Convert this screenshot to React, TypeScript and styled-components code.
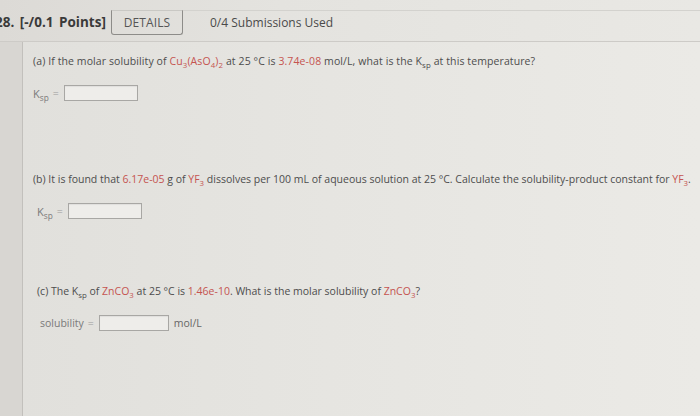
import React from "react";
import styled, { createGlobalStyle } from "styled-components";

const GlobalStyle = createGlobalStyle`
  html, body {
    margin: 0;
    padding: 0;
    background: #dedcd8;
    font-family: "Open Sans", "Liberation Sans", sans-serif;
  }
`;

const Page = styled.div`
  width: 700px;
  height: 416px;
  overflow: hidden;
  display: flex;
  flex-direction: column;
  background: #dedcd8;
`;

const Header = styled.header`
  height: 42px;
  flex-shrink: 0;
  display: flex;
  align-items: flex-start;
  box-sizing: border-box;
  border-bottom: 1px solid #cdcbc7;
  background: linear-gradient(90deg, #dcdad6 0%, #e4e3df 40%, #e9e8e4 100%);
`;

const Points = styled.div`
  margin: 13px 0 0 -5px;
  width: 116px;
  font-size: 13.5px;
  font-weight: 700;
  color: #3a3a3a;
  white-space: nowrap;
  word-spacing: 2px;
`;

const TabRow = styled.div`
  flex: 1;
  display: flex;
  align-items: flex-start;
  margin-top: 10px;
  border-top: 1px solid #d3d2ce;
`;

const Tab = styled.div`
  width: 72px;
  height: 25px;
  box-sizing: border-box;
  display: flex;
  align-items: center;
  justify-content: center;
  margin-top: -1px;
  border: 1px solid #8d8c89;
  border-top-color: #c9c8c4;
  border-radius: 0 0 3px 3px;
  font-size: 12px;
  color: #555;
  letter-spacing: 0.1px;
`;

const Submissions = styled.div`
  margin: 3px 0 0 27px;
  font-size: 12px;
  color: #4a4a4a;
`;

const Body = styled.div`
  flex: 1;
  display: flex;
`;

const Gutter = styled.div`
  width: 22px;
  background: #d8d6d2;
`;

const Card = styled.main`
  flex: 1;
  border-left: 1px solid #c2c0bc;
  padding: 0 0 0 10px;
  background: linear-gradient(90deg, #e1e0dc 0%, #e6e5e1 45%, #ebeae6 100%);
  display: flex;
  flex-direction: column;
`;

const Question = styled.section<{ $top: number; $indent: number }>`
  margin-top: ${({ $top }) => $top}px;
  padding-left: ${({ $indent }) => $indent}px;
  display: flex;
  flex-direction: column;
  gap: 16px;
`;

const Prompt = styled.p<{ $spacing?: number }>`
  margin: 0;
  height: 16px;
  line-height: 16px;
  font-size: 10.5px;
  letter-spacing: ${({ $spacing = 0 }) => $spacing}px;
  color: #4d4d4d;
  white-space: nowrap;
`;

const Red = styled.span`
  color: #c55450;
`;

const Sub = styled.sub`
  font-size: 0.75em;
  vertical-align: -3px;
  line-height: 0;
`;

const AnswerRow = styled.div<{ $indent: number }>`
  display: flex;
  align-items: center;
  height: 16px;
  padding-left: ${({ $indent }) => $indent}px;
  gap: 4px;
  font-size: 10.5px;
  color: #7a7a7a;
`;

const Label = styled.span`
  font-size: 11px;
`;

const Equals = styled.span`
  color: #9a9a9a;
  margin-right: 1px;
`;

const Input = styled.div<{ $width: number }>`
  width: ${({ $width }) => $width}px;
  height: 16px;
  box-sizing: border-box;
  border: 1px solid #a8a7a4;
  background: #eeedea;
  box-shadow: inset 0 1px 1px rgba(0, 0, 0, 0.06);
`;

const Unit = styled.span`
  color: #666;
  margin-left: 1px;
`;

const Ksp = () => (
  <>
    K<Sub>sp</Sub>
  </>
);

export default function App() {
  return (
    <Page>
      <GlobalStyle />
      <Header>
        <Points>28. [-/0.1 Points]</Points>
        <TabRow>
          <Tab>DETAILS</Tab>
          <Submissions>0/4 Submissions Used</Submissions>
        </TabRow>
      </Header>
      <Body>
        <Gutter />
        <Card>
          <Question $top={11} $indent={0}>
            <Prompt $spacing={0.1}>
              (a) If the molar solubility of{" "}
              <Red>
                Cu<Sub>3</Sub>(AsO<Sub>4</Sub>)<Sub>2</Sub>
              </Red>{" "}
              at 25 °C is <Red>3.74e-08</Red> mol/L, what is the <Ksp /> at
              this temperature?
            </Prompt>
            <AnswerRow $indent={0}>
              <Label>
                <Ksp />
              </Label>
              <Equals>=</Equals>
              <Input $width={74} />
            </AnswerRow>
          </Question>
          <Question $top={70} $indent={0}>
            <Prompt>
              (b) It is found that <Red>6.17e-05</Red> g of{" "}
              <Red>
                YF<Sub>3</Sub>
              </Red>{" "}
              dissolves per 100 mL of aqueous solution at 25 °C. Calculate the
              solubility-product constant for{" "}
              <Red>
                YF<Sub>3</Sub>
              </Red>
              .
            </Prompt>
            <AnswerRow $indent={4}>
              <Label>
                <Ksp />
              </Label>
              <Equals>=</Equals>
              <Input $width={74} />
            </AnswerRow>
          </Question>
          <Question $top={64} $indent={4}>
            <Prompt>
              (c) The <Ksp /> of{" "}
              <Red>
                ZnCO<Sub>3</Sub>
              </Red>{" "}
              at 25 °C is <Red>1.46e-10</Red>. What is the molar solubility of{" "}
              <Red>
                ZnCO<Sub>3</Sub>
              </Red>
              ?
            </Prompt>
            <AnswerRow $indent={3}>
              <span>solubility</span>
              <Equals>=</Equals>
              <Input $width={70} />
              <Unit>mol/L</Unit>
            </AnswerRow>
          </Question>
        </Card>
      </Body>
    </Page>
  );
}
